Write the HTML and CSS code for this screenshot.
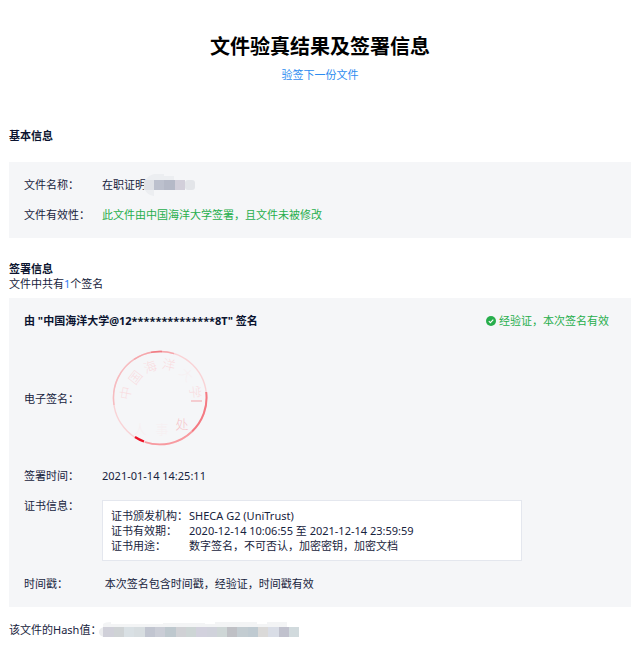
FILE: index.html
```
<!DOCTYPE html>
<html lang="zh-CN">
  <head>
    <meta charset="utf-8">
    <meta name="viewport" content="width=device-width, initial-scale=1">
    <title>文件验真结果及签署信息</title>
    <link rel="stylesheet" href="styles.css">
  </head>
  <body>
    <div class="main">
      <div class="header">
        <h1 class="title">文件验真结果及签署信息</h1>
        <a class="next-link" href="#">验签下一份文件</a>
      </div>

      <h2 class="heading">基本信息</h2>
      <div class="panel basic">
        <div class="row">
          <span class="label">文件名称：</span>
          <span class="value">在职证明</span>
          <svg class="mask-name" width="52" height="22" viewBox="0 0 52 22" aria-hidden="true">
            <path d="M0 8Q4 1 10 0h10v2h10v4H0zM1 16h9v6Q3 21 1 16z" fill="#eceef1"/>
            <rect x="0" y="6" width="10" height="10" fill="#dfe1e6"/>
            <rect x="10" y="6" width="10" height="10" fill="#bcc0cd"/>
            <rect x="20" y="6" width="11" height="10" fill="#b5b9c7"/>
            <rect x="31" y="6" width="10" height="10" fill="#d2cfda"/>
            <rect x="41" y="6" width="10" height="10" rx="3" fill="#e3e5e9"/>
          </svg>
        </div>
        <div class="row">
          <span class="label">文件有效性：</span>
          <span class="value green">此文件由中国海洋大学签署，且文件未被修改</span>
        </div>
      </div>

      <h2 class="heading">签署信息</h2>
      <p class="count">文件中共有<span class="blue">1</span>个签名</p>
      <div class="panel">
        <div class="sign-head">
          <strong>由 "中国海洋大学@12**************8T" 签名</strong>
          <span class="status green">
            <svg width="10" height="10" viewBox="0 0 10 10" aria-hidden="true">
              <circle cx="5" cy="5" r="5" fill="#27ae4c"/>
              <path d="M2.8 5.1l1.6 1.6 2.9-3" fill="none" stroke="#fff" stroke-width="1.1"/>
            </svg>
            经验证，本次签名有效
          </span>
        </div>
        <div class="row stamp-row">
          <span class="label">电子签名：</span>
          <svg class="stamp" width="96" height="96" viewBox="0 0 96 96" role="img" aria-label="电子签名">
            <g fill="none" stroke-width="1.4">
              <circle cx="48" cy="48" r="46.5" stroke="#f9d3d6"/>
              <path d="M2 55A46.5 46.5 0 0 1 24 8" stroke="#f6bcc0"/>
              <path d="M22 9.5A46.5 46.5 0 0 1 62 3.7" stroke="#f5a7ac"/>
              <path d="M39 2.4A46.5 46.5 0 0 1 50 1.5" stroke="#ef7c84"/>
              <path d="M94.2 42A46.5 46.5 0 0 1 80 81.5" stroke="#f47a83" stroke-width="2"/>
              <path d="M80 81.5A46.5 46.5 0 0 1 33 92" stroke="#f79aa0" stroke-width="1.8"/>
              <path d="M32 91.5A46.5 46.5 0 0 1 23 87" stroke="#ec1226" stroke-width="2.2"/>
              <path d="M79 51h11" stroke="#f4a3a9" stroke-width="1"/>
            </g>
            <g class="stamp-text">
              <text transform="translate(13 43) rotate(-80)">中</text>
              <text transform="translate(23 27) rotate(-52)">国</text>
              <text transform="translate(38 16) rotate(-20)">海</text>
              <text transform="translate(57 14) rotate(12)">洋</text>
              <text class="faint" transform="translate(75 24) rotate(45)">大</text>
              <text transform="translate(84 42) rotate(84)">学</text>
              <text class="faint" transform="translate(28 78)">人</text>
              <text class="faint" transform="translate(50 78)">事</text>
              <text class="dark" transform="translate(70 73)">处</text>
            </g>
          </svg>
        </div>
        <div class="row">
          <span class="label">签署时间：</span>
          <span class="value">2021-01-14 14:25:11</span>
        </div>
        <div class="row">
          <span class="label">证书信息：</span>
          <div class="cert">
            <div class="cert-row"><span class="label">证书颁发机构：</span><span>SHECA G2 (UniTrust)</span></div>
            <div class="cert-row"><span class="label">证书有效期：</span><span>2020-12-14 10:06:55 至 2021-12-14 23:59:59</span></div>
            <div class="cert-row"><span class="label">证书用途：</span><span>数字签名，不可否认，加密密钥，加密文档</span></div>
          </div>
        </div>
        <div class="row">
          <span class="label">时间戳：</span>
          <span class="value">&nbsp;本次签名包含时间戳，经验证，时间戳有效</span>
        </div>
      </div>

      <div class="hash">
        <span>该文件的Hash值：</span>
        <svg class="mask-hash" width="202" height="16" viewBox="0 0 202 16" aria-hidden="true">
          <path d="M4 5V2q2-2 8-2v2h52V1h42v1h10V0h42v2h10V0h20v5z" fill="#f3f4f5"/>
          <path d="M5 5Q0 6 0 10t5 5z" fill="#ebecee"/>
          <rect x="4" y="5" width="11" height="10" fill="#d0d0d9"/>
          <rect x="15" y="5" width="10" height="10" fill="#cfd3d5"/>
          <rect x="25" y="5" width="10" height="10" fill="#d9e0e4"/>
          <rect x="35" y="5" width="11" height="10" fill="#d7dde0"/>
          <rect x="46" y="5" width="10" height="10" fill="#c1c5d0"/>
          <rect x="56" y="5" width="10" height="10" fill="#cacdd6"/>
          <rect x="66" y="5" width="11" height="10" fill="#bec8ce"/>
          <rect x="77" y="5" width="10" height="10" fill="#d0d1d5"/>
          <rect x="87" y="5" width="10" height="10" fill="#cdd5d5"/>
          <rect x="97" y="5" width="11" height="10" fill="#d2d1dd"/>
          <rect x="108" y="5" width="10" height="10" fill="#d0d2db"/>
          <rect x="118" y="5" width="10" height="10" fill="#ced6d6"/>
          <rect x="128" y="5" width="10" height="10" fill="#bfc0c5"/>
          <rect x="138" y="5" width="11" height="10" fill="#c3ccd1"/>
          <rect x="149" y="5" width="10" height="10" fill="#bfcad1"/>
          <rect x="159" y="5" width="10" height="10" fill="#dad9d8"/>
          <rect x="169" y="5" width="11" height="10" fill="#d9dde6"/>
          <rect x="180" y="5" width="10" height="10" fill="#c0c1cd"/>
          <rect x="190" y="5" width="10" height="10" fill="#d1dadd"/>
        </svg>
      </div>
    </div>
  </body>
</html>
```
FILE: styles.css
```
* {
  box-sizing: border-box;
}

body {
  margin: 0;
  background: #fff;
  color: #17233d;
  font-family: "Noto Sans", "Noto Sans CJK SC", sans-serif;
  font-size: 11px;
  line-height: 15px;
}

.main {
  padding: 32px 9px 8px;
}

.header {
  display: flex;
  flex-direction: column;
  align-items: center;
  gap: 5px;
  margin-bottom: 46px;
}

.title {
  margin: 0;
  color: #000;
  font-size: 20px;
  line-height: 30px;
}

.next-link {
  color: #2d8cf0;
  text-decoration: none;
}

.heading {
  margin: 0;
  font-size: 11px;
  color: #0b1430;
}

.count {
  margin: 0 0 7px;
}

.blue {
  color: #2d7cf6;
}

.green {
  color: #27ae4c;
}

.panel {
  display: flex;
  flex-direction: column;
  gap: 15px;
  padding: 15px 15px 16px;
  background: #f5f6f8;
}

.basic {
  margin: 19px 0 23px;
}

.row {
  display: flex;
}

.label {
  flex: none;
  width: 78px;
}

.mask-name {
  margin: -3px 0 -4px -2px;
}

.sign-head {
  display: flex;
  justify-content: space-between;
  padding-right: 7px;
  color: #0b1430;
}

.status {
  display: flex;
  align-items: center;
  gap: 3px;
}

.stamp-row {
  align-items: center;
  padding: 7px 0;
}

.stamp {
  margin-left: 10px;
}

.stamp-text {
  font-family: "Noto Sans CJK SC", sans-serif;
  font-size: 13px;
  font-weight: 300;
  text-anchor: middle;
  dominant-baseline: central;
  fill: #f9dcdf;
}

.stamp-text .faint {
  fill: #f7eff1;
}

.stamp-text .dark {
  fill: #f6c4c8;
}

.cert {
  flex: 0 1 420px;
  margin-top: 2px;
  padding: 7px 8px;
  border: 1px solid #e4e7ee;
  background: #fff;
}

.cert-row {
  display: flex;
}

.hash {
  display: flex;
  margin-top: 15px;
}

.mask-hash {
  margin-left: -2px;
}
```
